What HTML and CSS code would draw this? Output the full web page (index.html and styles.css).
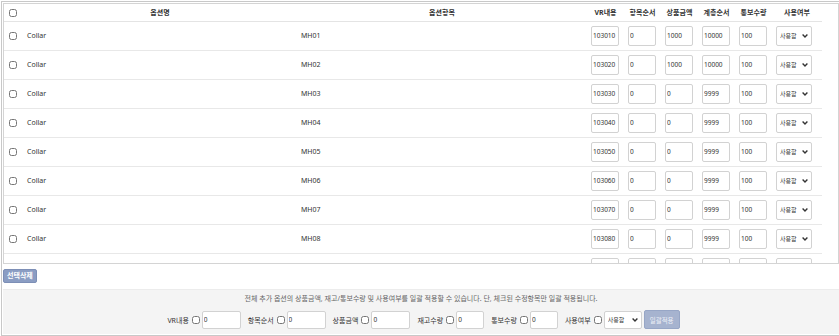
FILE: index.html
```html
<!doctype html>
<html lang="ko">
  <head>
    <meta charset="UTF-8" />
    <meta name="viewport" content="width=device-width, initial-scale=1.0" />
    <title>추가옵션 관리</title>
    <link rel="stylesheet" href="styles.css">
  </head>
  <body>
    <div class="wrap">
      <div class="scroll-box">
        <table class="opt-table">
          <colgroup>
            <col class="c-chk"><col class="c-name"><col class="c-item">
            <col class="c-num"><col class="c-num"><col class="c-num"><col class="c-num"><col class="c-num">
            <col class="c-use">
          </colgroup>
          <thead>
            <tr>
              <th><input type="checkbox" class="chk"></th>
              <th>옵션명</th>
              <th>옵션항목</th>
              <th>VR내용</th>
              <th>항목순서</th>
              <th>상품금액</th>
              <th>계층순서</th>
              <th>통보수량</th>
              <th>사용여부</th>
            </tr>
          </thead>
          <tbody id="rows"></tbody>
        </table>
      </div>

      <button class="btn-del">선택삭제</button>

      <div class="bulk">
        <p class="bulk-note">전체 추가 옵션의 상품금액, 재고/통보수량 및 사용여부를 일괄 적용할 수 있습니다. 단, 체크된 수정항목만 일괄 적용됩니다.</p>
        <div class="bulk-row">
          <label>VR내용 <input type="checkbox" class="chk"></label>
          <input type="text" class="inp wide" value="0">
          <label>항목순서 <input type="checkbox" class="chk"></label>
          <input type="text" class="inp wide" value="0">
          <label>상품금액 <input type="checkbox" class="chk"></label>
          <input type="text" class="inp wide" value="0">
          <label>재고수량 <input type="checkbox" class="chk"></label>
          <input type="text" class="inp" value="0">
          <label>통보수량 <input type="checkbox" class="chk"></label>
          <input type="text" class="inp" value="0">
          <label>사용여부 <input type="checkbox" class="chk"></label>
          <span class="sel-wrap wide">
            <select class="sel"><option>사용함</option><option>사용안함</option></select>
            <svg class="chev" width="6" height="4" viewBox="0 0 6 4"><polyline points="0.6,0.6 3,3 5.4,0.6" fill="none" stroke="#333" stroke-width="1.4"/></svg>
          </span>
          <button class="btn-apply">일괄적용</button>
        </div>
      </div>
    </div>

    <script>
      const rows = [
        ['MH01', '103010', '0', '1000', '10000', '100'],
        ['MH02', '103020', '0', '1000', '10000', '100'],
        ['MH03', '103030', '0', '0', '9999', '100'],
        ['MH04', '103040', '0', '0', '9999', '100'],
        ['MH05', '103050', '0', '0', '9999', '100'],
        ['MH06', '103060', '0', '0', '9999', '100'],
        ['MH07', '103070', '0', '0', '9999', '100'],
        ['MH08', '103080', '0', '0', '9999', '100'],
        ['MH09', '103090', '0', '0', '9999', '100']
      ];
      const chev = '<svg class="chev" width="6" height="4" viewBox="0 0 6 4"><polyline points="0.6,0.6 3,3 5.4,0.6" fill="none" stroke="#333" stroke-width="1.4"/></svg>';
      const body = document.getElementById('rows');
      rows.forEach((r) => {
        const tr = document.createElement('tr');
        let html = '<td><input type="checkbox" class="chk"></td><td>Collar</td><td>' + r[0] + '</td>';
        for (let i = 1; i < r.length; i++) {
          html += '<td><input type="text" class="inp" value="' + r[i] + '"></td>';
        }
        html += '<td><span class="sel-wrap"><select class="sel"><option>사용함</option><option>사용안함</option></select>' + chev + '</span></td>';
        tr.innerHTML = html;
        body.appendChild(tr);
      });
    </script>
  </body>
</html>
```

FILE: styles.css
```css
* {
  box-sizing: border-box;
  margin: 0;
  padding: 0;
}
body {
  font-family: 'Noto Sans', 'Noto Sans CJK KR', sans-serif;
  font-size: 7px;
  color: #333;
  background: #fff;
}
.wrap {
  margin: 1px 0 0 1px;
  border: 1px solid #c8c8c8;
  border-right: none;
  padding: 1px 0 0 1px;
  height: 335px;
}
.scroll-box {
  height: 261px;
  border: 1px solid #d4d4d4;
  overflow-y: scroll;
  background: #fff;
}
.opt-table {
  width: 818px;
  border-collapse: collapse;
  table-layout: fixed;
}
.c-chk { width: 19px; }
.c-name { width: 274px; }
.c-item { width: 290px; }
.c-num { width: 37px; }
.c-use { width: 50px; }
.opt-table th {
  height: 17px;
  font-weight: bold;
  text-align: center;
  border-bottom: 1px solid #e4e4e4;
  white-space: nowrap;
}
.opt-table td {
  height: 29px;
  border-bottom: 1px solid #e8e8e8;
  padding: 0 4px;
  text-align: left;
}
.opt-table td:first-child,
.opt-table th:first-child {
  padding: 0 0 0 5px;
  text-align: left;
}
.chk {
  width: 8px;
  height: 8px;
  margin: 0;
  vertical-align: middle;
}
.inp {
  width: 28px;
  height: 20px;
  border: 1px solid #d2d2d2;
  border-radius: 2px;
  padding: 0 1px;
  font-family: inherit;
  font-size: 6.5px;
  color: #333;
  background: #fff;
  vertical-align: middle;
}
.inp.wide {
  width: 39px;
}
.sel-wrap {
  position: relative;
  display: inline-block;
  width: 36px;
  height: 20px;
  vertical-align: middle;
}
.sel-wrap.wide {
  width: 38px;
  height: 18px;
}
.sel {
  appearance: none;
  -webkit-appearance: none;
  width: 100%;
  height: 100%;
  border: 1px solid #d2d2d2;
  border-radius: 2px;
  font-family: inherit;
  font-size: 6px;
  color: #333;
  background: #fff;
  padding: 0 0 0 3px;
}
.chev {
  position: absolute;
  right: 4px;
  top: 50%;
  margin-top: -2px;
  pointer-events: none;
}
.btn-del {
  display: block;
  margin-top: 5px;
  height: 14px;
  line-height: 12px;
  padding: 0 3px;
  background: #8b9dc3;
  color: #fff;
  font-family: inherit;
  font-size: 7px;
  font-weight: bold;
  border: 1px solid #7d8fb6;
  border-radius: 2px;
}
.bulk {
  margin-top: 6px;
  height: 45px;
  background: #f4f4f4;
  border-top: 1px solid #ececec;
  padding-top: 3px;
  text-align: center;
}
.bulk-note {
  color: #666;
  font-size: 7px;
  line-height: 12px;
}
.bulk-row {
  display: flex;
  justify-content: center;
  align-items: center;
  gap: 2px;
  margin-top: 5px;
}
.bulk-row label {
  display: flex;
  align-items: center;
  gap: 3px;
  font-size: 7px;
  color: #333;
  margin-left: 5px;
}
.bulk-row .inp {
  height: 18px;
}
.btn-apply {
  height: 19px;
  padding: 0 5px;
  background: #a6b3cf;
  color: #eef1f7;
  font-family: inherit;
  font-size: 6.5px;
  border: 1px solid #97a6c6;
  border-radius: 2px;
}
```
